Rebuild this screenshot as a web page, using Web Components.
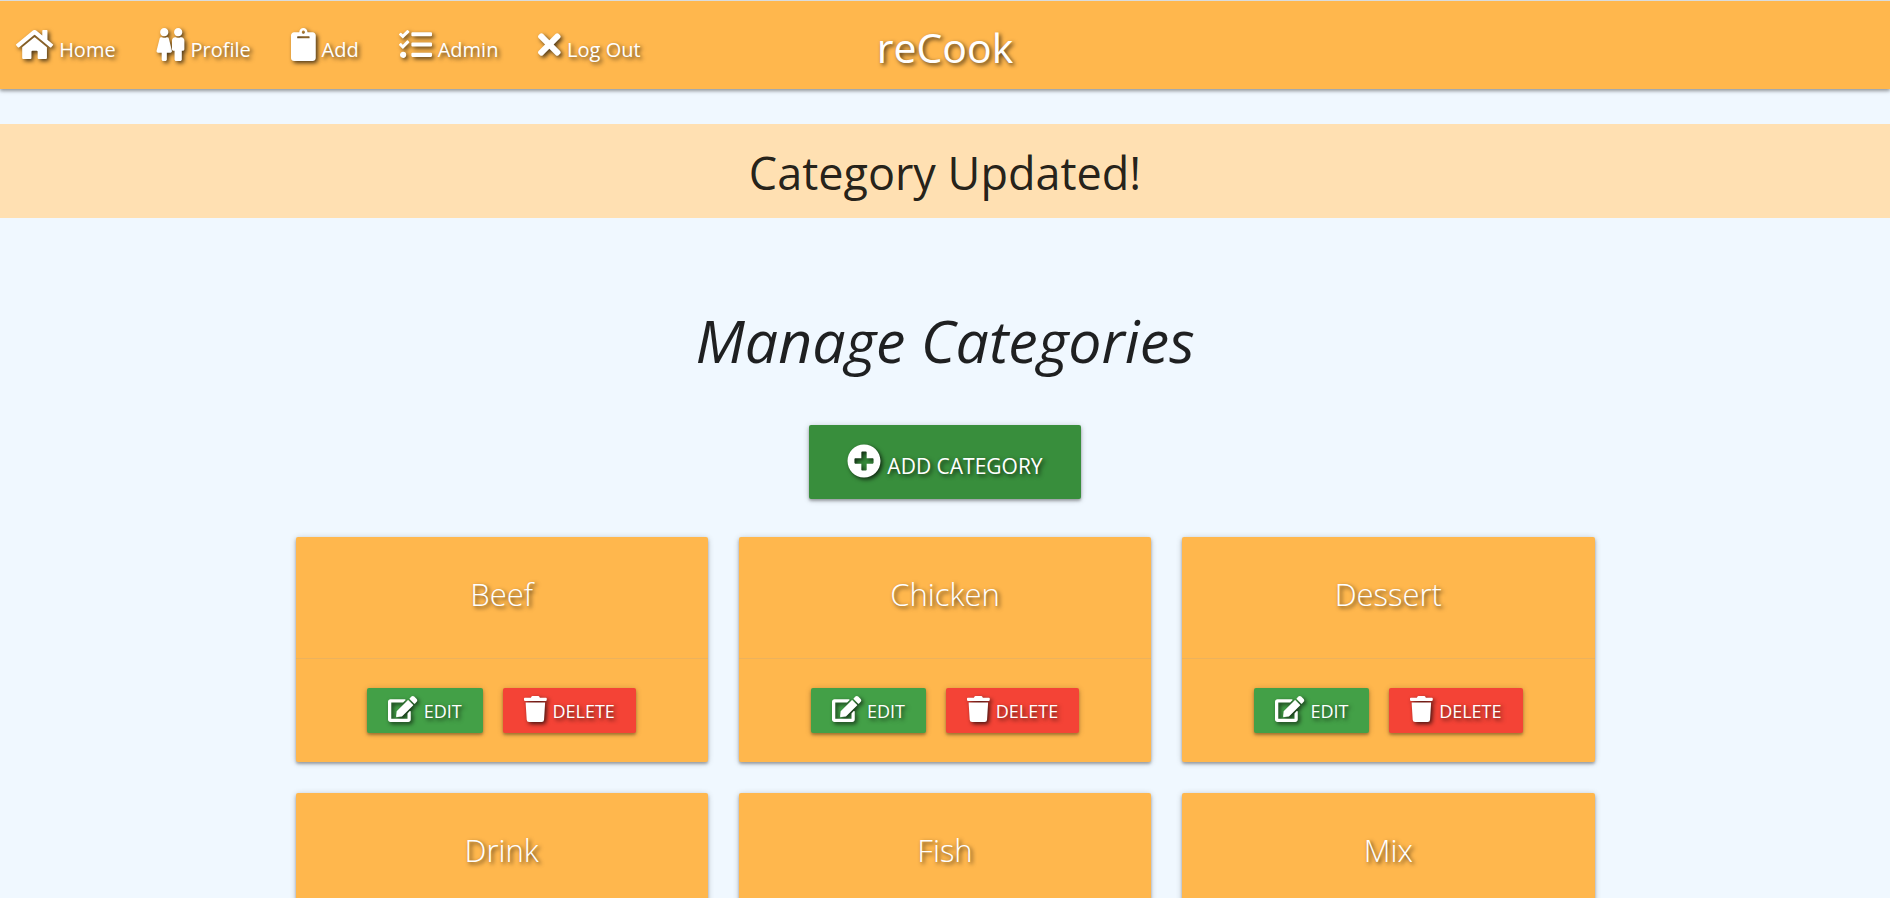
<!DOCTYPE html>
<html lang="en">
<head>
<meta charset="utf-8">
<meta name="viewport" content="width=device-width, initial-scale=1">
<title>reCook - Manage Categories</title>
<style>
  body {
    margin: 0;
    background: #f0f8ff;
    color: rgba(0, 0, 0, .87);
    font-family: "Open Sans", "Noto Sans", sans-serif;
    --amber: #ffb74d;
    --text-shadow: 2px 2px 4px rgba(0, 0, 0, .7);
    --icon-shadow: drop-shadow(2px 2px 2px rgba(0, 0, 0, .7));
    --depth: 0 2px 3px 0 rgba(0, 0, 0, .28), 0 1px 6px 0 rgba(0, 0, 0, .2);
  }
</style>
</head>
<body>
<rc-app></rc-app>

<script>
const ICONS = {
  home: [576, 'M280.37 148.26L96 300.11V464a16 16 0 0 0 16 16l112.06-.29a16 16 0 0 0 15.92-16V368a16 16 0 0 1 16-16h64a16 16 0 0 1 16 16v95.64a16 16 0 0 0 16 16.05L464 480a16 16 0 0 0 16-16V300L295.67 148.26a12.19 12.19 0 0 0-15.3 0zM571.6 251.47L488 182.56V44.05a12 12 0 0 0-12-12h-56a12 12 0 0 0-12 12v72.61L318.47 43a48 48 0 0 0-61 0L4.34 251.47a12 12 0 0 0-1.6 16.9l25.5 31A12 12 0 0 0 45.15 301l235.22-193.74a12.19 12.19 0 0 1 15.3 0L530.9 301a12 12 0 0 0 16.9-1.6l25.5-31a12 12 0 0 0-1.7-16.93z'],
  female: [256, 'M128 0c35.346 0 64 28.654 64 64s-28.654 64-64 64c-35.346 0-64-28.654-64-64S92.654 0 128 0m119.283 354.179l-48-192A24 24 0 0 0 176 144h-11.36c-22.711 10.443-49.59 10.894-73.28 0H80a24 24 0 0 0-23.283 18.179l-48 192C4.935 369.305 16.383 384 32 384h56v104c0 13.255 10.745 24 24 24h32c13.255 0 24-10.745 24-24V384h56c15.591 0 27.071-14.671 23.283-29.821z'],
  male: [192, 'M96 0c35.346 0 64 28.654 64 64s-28.654 64-64 64-64-28.654-64-64S60.654 0 96 0m48 144h-11.36c-22.711 10.443-49.59 10.894-73.28 0H48c-26.51 0-48 21.49-48 48v136c0 13.255 10.745 24 24 24h16v136c0 13.255 10.745 24 24 24h64c13.255 0 24-10.745 24-24V352h16c13.255 0 24-10.745 24-24V192c0-26.51-21.49-48-48-48z'],
  clipboard: [384, 'M384 112v352c0 26.51-21.49 48-48 48H48c-26.51 0-48-21.49-48-48V112c0-26.51 21.49-48 48-48h80c0-35.29 28.71-64 64-64s64 28.71 64 64h80c26.51 0 48 21.49 48 48zM192 40c-13.255 0-24 10.745-24 24s10.745 24 24 24 24-10.745 24-24-10.745-24-24-24m96 114v-20a6 6 0 0 0-6-6H102a6 6 0 0 0-6 6v20a6 6 0 0 0 6 6h180a6 6 0 0 0 6-6z'],
  tasks: [512, 'M139.61 35.5a12 12 0 0 0-17 0L58.93 98.81l-22.7-22.12a12 12 0 0 0-17 0L3.53 92.41a12 12 0 0 0 0 17l47.59 47.4a12.78 12.78 0 0 0 17.61 0l15.59-15.62L156.52 69a12.09 12.09 0 0 0 .09-17zm0 159.19a12 12 0 0 0-17 0l-63.68 63.72-22.7-22.1a12 12 0 0 0-17 0L3.53 252a12 12 0 0 0 0 17L51 316.5a12.77 12.77 0 0 0 17.6 0l15.7-15.69 72.2-72.22a12 12 0 0 0 .09-16.9zM64 368c-26.49 0-48.59 21.5-48.59 48S37.53 464 64 464a48 48 0 0 0 0-96zm432 16H208a16 16 0 0 0-16 16v32a16 16 0 0 0 16 16h288a16 16 0 0 0 16-16v-32a16 16 0 0 0-16-16zm0-320H208a16 16 0 0 0-16 16v32a16 16 0 0 0 16 16h288a16 16 0 0 0 16-16V80a16 16 0 0 0-16-16zm0 160H208a16 16 0 0 0-16 16v32a16 16 0 0 0 16 16h288a16 16 0 0 0 16-16v-32a16 16 0 0 0-16-16z'],
  times: [352, 'M242.72 256l100.07-100.07c12.28-12.28 12.28-32.19 0-44.48l-22.24-22.24c-12.28-12.28-32.19-12.28-44.48 0L176 189.28 75.93 89.21c-12.28-12.28-32.19-12.28-44.48 0L9.21 111.45c-12.28 12.28-12.28 32.19 0 44.48L109.28 256 9.21 356.07c-12.28 12.28-12.28 32.19 0 44.48l22.24 22.24c12.28 12.28 32.2 12.28 44.48 0L176 322.72l100.07 100.07c12.28 12.28 32.2 12.28 44.48 0l22.24-22.24c12.28-12.28 12.28-32.19 0-44.48L242.72 256z'],
  plus: [512, 'M256 8C119 8 8 119 8 256s111 248 248 248 248-111 248-248S393 8 256 8zm144 276c0 6.6-5.4 12-12 12h-92v92c0 6.6-5.4 12-12 12h-56c-6.6 0-12-5.4-12-12v-92h-92c-6.6 0-12-5.4-12-12v-56c0-6.6 5.4-12 12-12h92v-92c0-6.6 5.4-12 12-12h56c6.6 0 12 5.4 12 12v92h92c6.6 0 12 5.4 12 12v56z'],
  edit: [576, 'M402.6 83.2l90.2 90.2c3.8 3.8 3.8 10 0 13.8L274.4 405.6l-92.8 10.3c-12.4 1.4-22.9-9.1-21.5-21.5l10.3-92.8L388.8 83.2c3.8-3.8 10-3.8 13.8 0zm162-22.9l-48.8-48.8c-15.2-15.2-39.9-15.2-55.2 0l-35.4 35.4c-3.8 3.8-3.8 10 0 13.8l90.2 90.2c3.8 3.8 10 3.8 13.8 0l35.4-35.4c15.2-15.3 15.2-40 0-55.2zM384 346.2V448H64V128h229.8c3.2 0 6.2-1.3 8.5-3.5l40-40c7.6-7.6 2.2-20.5-8.5-20.5H48C21.5 64 0 85.5 0 112v352c0 26.5 21.5 48 48 48h352c26.5 0 48-21.5 48-48V306.2c0-10.7-12.9-16-20.5-8.5l-40 40c-2.2 2.3-3.5 5.3-3.5 8.5z'],
  trash: [448, 'M432 32H312l-9.4-18.7A24 24 0 0 0 281.1 0H166.8a23.72 23.72 0 0 0-21.4 13.3L136 32H16A16 16 0 0 0 0 48v32a16 16 0 0 0 16 16h416a16 16 0 0 0 16-16V48a16 16 0 0 0-16-16zM53.2 467a48 48 0 0 0 47.9 45h245.8a48 48 0 0 0 47.9-45L416 128H32z']
};

class RcElement extends HTMLElement {
  connectedCallback() {
    if (this.shadowRoot) return;
    this.attachShadow({ mode: 'open' }).innerHTML = this.render();
  }
}

/* One glyph; its height is set by --icon-size. */
customElements.define('rc-icon', class extends RcElement {
  render() {
    const [width, path] = ICONS[this.getAttribute('name')];
    return `<style>
      :host { display: inline-block; vertical-align: -4px; height: var(--icon-size, 33px); }
      svg { display: block; height: 100%; fill: currentColor; overflow: visible; filter: var(--icon-shadow); }
    </style>
    <svg viewBox="0 0 ${width} 512" aria-hidden="true"><path d="${path}"/></svg>`;
  }
});

customElements.define('rc-nav-link', class extends RcElement {
  render() {
    const icons = this.getAttribute('icons').split(' ').map(n => `<rc-icon name="${n}"></rc-icon>`).join('');
    return `<style>
      :host { display: block; }
      a { display: block; color: #fff; text-decoration: none; white-space: nowrap;
          padding-top: 10px; font-size: 20px; line-height: 78px; text-shadow: var(--text-shadow); }
      span { margin-left: 6px; }
    </style>
    <a href="${this.getAttribute('href')}">${icons}<span><slot></slot></span></a>`;
  }
});

customElements.define('rc-navbar', class extends RcElement {
  render() {
    return `<style>
      :host { display: block; border-top: 1px solid #d9dcde; background: var(--amber); box-shadow: var(--depth); }
      nav { display: grid; grid-template-columns: 1fr auto 1fr; align-items: center; }
      .links { display: flex; gap: 40px; padding-left: 16px; }
      .brand { color: #fff; text-decoration: none; padding-top: 4px; font-size: 41px; line-height: 84px; text-shadow: var(--text-shadow); }
    </style>
    <nav>
      <div class="links"><slot></slot></div>
      <a class="brand" href="#home">reCook</a>
    </nav>`;
  }
});

customElements.define('rc-flash', class extends RcElement {
  render() {
    return `<style>
      :host { display: block; margin-top: 35px; background: #ffe0b2; text-align: center; }
      p { margin: 0; padding: 18px 0 14px; font-size: 45px; line-height: 62px; }
    </style>
    <p role="status"><slot></slot></p>`;
  }
});

customElements.define('rc-button', class extends RcElement {
  render() {
    return `<style>
      :host { display: inline-block; }
      a { display: block; box-sizing: border-box; border-radius: 2px; color: #fff; text-decoration: none;
          text-transform: uppercase; text-align: center; white-space: nowrap; padding: 2px 21px 0;
          font-size: 18px; line-height: 43px; background: #43a047;
          text-shadow: var(--text-shadow); box-shadow: var(--depth); --icon-size: 26px; }
      span { margin-left: 6px; }
      :host([kind="danger"]) a { background: #f44336; }
      :host([kind="large"]) a { background: #388e3c; padding: 8px 38px 0; font-size: 21px; line-height: 66px; --icon-size: 34px; }
    </style>
    <a href="${this.getAttribute('href')}"><rc-icon name="${this.getAttribute('icon')}"></rc-icon><span><slot></slot></span></a>`;
  }
});

customElements.define('rc-category-card', class extends RcElement {
  render() {
    return `<style>
      :host { display: block; border-radius: 2px; background: var(--amber); box-shadow: var(--depth); }
      h2 { margin: 0; padding: 33px 24px 40px; color: #fff; text-align: center;
           font-size: 31px; line-height: 48px; font-weight: 300; text-shadow: var(--text-shadow); }
      .actions { display: flex; justify-content: center; gap: 20px; padding: 29px 24px;
                 border-top: 1px solid rgba(160, 160, 160, .2); }
    </style>
    <h2><slot></slot></h2>
    <div class="actions">
      <rc-button icon="edit" href="#edit">Edit</rc-button>
      <rc-button icon="trash" kind="danger" href="#delete">Delete</rc-button>
    </div>`;
  }
});

customElements.define('rc-app', class extends RcElement {
  render() {
    const cards = ['Beef', 'Chicken', 'Dessert', 'Drink', 'Fish', 'Mix']
      .map(name => `<rc-category-card>${name}</rc-category-card>`).join('');
    return `<style>
      :host { display: block; }
      main { width: calc(70% - 24px); margin: 0 auto; padding-bottom: 31px; text-align: center; }
      h1 { margin: 0; padding: 85px 0 48px; font-size: 59px; line-height: 74px; font-weight: 400; font-style: italic; }
      .grid { display: grid; grid-template-columns: repeat(auto-fit, minmax(320px, 1fr)); gap: 31px; padding-top: 38px; }
      .add { display: flex; justify-content: center; }
    </style>
    <rc-navbar>
      <rc-nav-link icons="home" href="#home">Home</rc-nav-link>
      <rc-nav-link icons="female male" href="#profile">Profile</rc-nav-link>
      <rc-nav-link icons="clipboard" href="#add">Add</rc-nav-link>
      <rc-nav-link icons="tasks" href="#admin">Admin</rc-nav-link>
      <rc-nav-link icons="times" href="#logout">Log Out</rc-nav-link>
    </rc-navbar>
    <rc-flash>Category Updated!</rc-flash>
    <main>
      <h1>Manage Categories</h1>
      <div class="add"><rc-button kind="large" icon="plus" href="#new">Add Category</rc-button></div>
      <div class="grid">${cards}</div>
    </main>`;
  }
});
</script>
</body>
</html>
